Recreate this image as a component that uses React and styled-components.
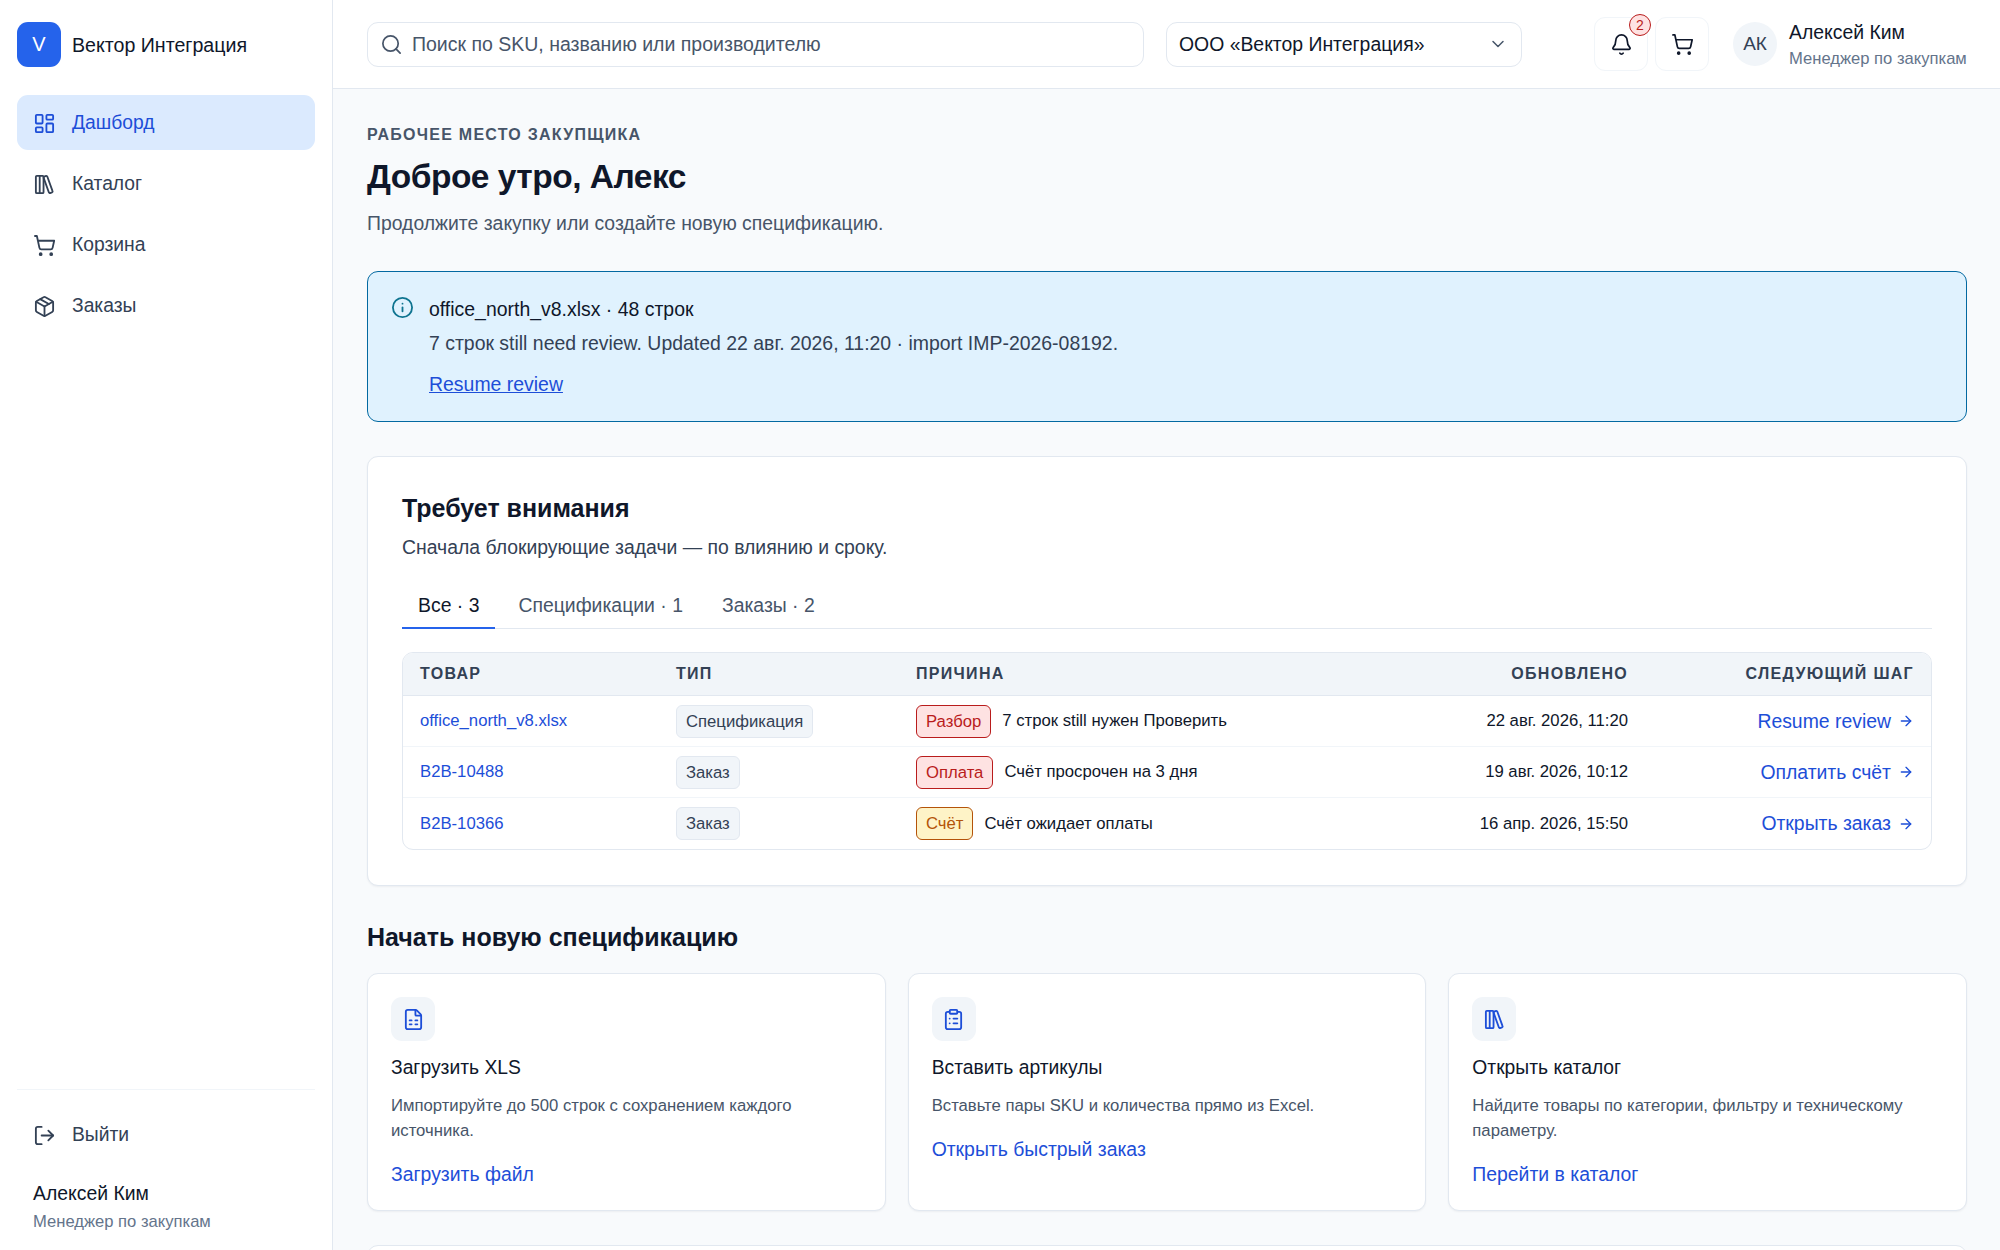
import styled, { createGlobalStyle } from "styled-components";
import {
  Search,
  ChevronDown,
  Bell,
  ShoppingCart,
  Info,
  ArrowRight,
  LogOut,
  ClipboardList,
  LayoutDashboard,
  LibraryBig,
  Package,
  FileSpreadsheet,
} from "lucide-react";

const GlobalStyle = createGlobalStyle`
  * { box-sizing: border-box; }
  html, body { margin: 0; height: 100%; overflow: hidden; }
  body {
    font-family: "Liberation Sans", Arial, sans-serif;
    color: #0f172a;
    background: #f8fafc;
  }
  a { text-decoration: none; }
`;

const navItems = [
  { label: "Дашборд", icon: LayoutDashboard, active: true },
  { label: "Каталог", icon: LibraryBig },
  { label: "Корзина", icon: ShoppingCart },
  { label: "Заказы", icon: Package },
];

const rows = [
  { id: "office_north_v8.xlsx", type: "Спецификация", tag: "Разбор", tone: "danger", reason: "7 строк still нужен Проверить", date: "22 авг. 2026, 11:20", next: "Resume review" },
  { id: "B2B-10488", type: "Заказ", tag: "Оплата", tone: "danger", reason: "Счёт просрочен на 3 дня", date: "19 авг. 2026, 10:12", next: "Оплатить счёт" },
  { id: "B2B-10366", type: "Заказ", tag: "Счёт", tone: "warn", reason: "Счёт ожидает оплаты", date: "16 апр. 2026, 15:50", next: "Открыть заказ" },
];

const actions = [
  { icon: FileSpreadsheet, title: "Загрузить XLS", text: "Импортируйте до 500 строк с сохранением каждого источника.", link: "Загрузить файл" },
  { icon: ClipboardList, title: "Вставить артикулы", text: "Вставьте пары SKU и количества прямо из Excel.", link: "Открыть быстрый заказ" },
  { icon: LibraryBig, title: "Открыть каталог", text: "Найдите товары по категории, фильтру и техническому параметру.", link: "Перейти в каталог" },
];

export default function App() {
  return (
    <Shell>
      <GlobalStyle />
      <Sidebar>
        <Brand>
          <BrandMark>V</BrandMark>
          <BrandName>Вектор Интеграция</BrandName>
        </Brand>
        <Nav>
          {navItems.map((item) => (
            <NavItem key={item.label} $active={item.active}>
              <item.icon size={23} strokeWidth={1.9} />
              {item.label}
            </NavItem>
          ))}
        </Nav>
        <SideFooter>
          <NavItem>
            <LogOut size={23} strokeWidth={1.9} />
            Выйти
          </NavItem>
          <SideUser>
            <UserName>Алексей Ким</UserName>
            <SideRole>Менеджер по закупкам</SideRole>
          </SideUser>
        </SideFooter>
      </Sidebar>
      <Column>
        <Topbar>
          <SearchBox>
            <Search size={23} strokeWidth={1.8} color="#475569" />
            Поиск по SKU, названию или производителю
          </SearchBox>
          <Select>
            ООО «Вектор Интеграция»
            <ChevronDown size={20} strokeWidth={1.8} color="#475569" />
          </Select>
          <IconGroup>
            <IconButton>
              <Bell size={23} strokeWidth={1.8} />
              <Badge>2</Badge>
            </IconButton>
            <IconButton>
              <ShoppingCart size={23} strokeWidth={1.8} />
            </IconButton>
          </IconGroup>
          <TopUser>
            <Avatar>АК</Avatar>
            <TopUserText>
              <UserName>Алексей Ким</UserName>
              <UserRole>Менеджер по закупкам</UserRole>
            </TopUserText>
          </TopUser>
        </Topbar>
        <Content>
          <Eyebrow>РАБОЧЕЕ МЕСТО ЗАКУПЩИКА</Eyebrow>
          <Title>Доброе утро, Алекс</Title>
          <Lead>Продолжите закупку или создайте новую спецификацию.</Lead>
          <Alert>
            <Info size={23} strokeWidth={1.9} color="#0e7490" />
            <div>
              <AlertTitle>office_north_v8.xlsx · 48 строк</AlertTitle>
              <AlertText>7 строк still need review. Updated 22 авг. 2026, 11:20 · import IMP-2026-08192.</AlertText>
              <AlertLink href="#">Resume review</AlertLink>
            </div>
          </Alert>
          <Panel>
            <PanelTitle>Требует внимания</PanelTitle>
            <PanelText>Сначала блокирующие задачи — по влиянию и сроку.</PanelText>
            <Tabs>
              <Tab $active>Все · 3</Tab>
              <Tab>Спецификации · 1</Tab>
              <Tab>Заказы · 2</Tab>
            </Tabs>
            <Table>
              <HeadRow>
                <span>ТОВАР</span>
                <span>ТИП</span>
                <span>ПРИЧИНА</span>
                <RightCell>ОБНОВЛЕНО</RightCell>
                <RightCell>СЛЕДУЮЩИЙ ШАГ</RightCell>
              </HeadRow>
              {rows.map((row) => (
                <Row key={row.id}>
                  <RowLink href="#">{row.id}</RowLink>
                  <div><TypeChip>{row.type}</TypeChip></div>
                  <Reason>
                    <Tag $tone={row.tone}>{row.tag}</Tag>
                    {row.reason}
                  </Reason>
                  <RightCell>{row.date}</RightCell>
                  <NextStep href="#">
                    {row.next}
                    <ArrowRight size={16} />
                  </NextStep>
                </Row>
              ))}
            </Table>
          </Panel>
          <SectionTitle>Начать новую спецификацию</SectionTitle>
          <Cards>
            {actions.map((action) => (
              <Card key={action.title}>
                <CardIcon><action.icon size={23} strokeWidth={1.9} /></CardIcon>
                <CardTitle>{action.title}</CardTitle>
                <CardText>{action.text}</CardText>
                <CardLink href="#">{action.link}</CardLink>
              </Card>
            ))}
          </Cards>
          <NextPanel />
        </Content>
      </Column>
    </Shell>
  );
}

const Shell = styled.div`
  display: flex;
  height: 100vh;
  overflow: hidden;
`;

const Sidebar = styled.aside`
  flex: 0 0 333px;
  display: flex;
  flex-direction: column;
  padding: 22px 17px 16px 17px;
  background: #fff;
  border-right: 1px solid #e2e8f0;
`;

const Brand = styled.div`
  display: flex;
  align-items: center;
  gap: 11px;
  margin-bottom: 28px;
`;

const BrandMark = styled.div`
  width: 44px;
  height: 45px;
  display: flex;
  align-items: center;
  justify-content: center;
  border-radius: 11px;
  background: #2563eb;
  color: #fff;
  font-size: 20px;
`;

const BrandName = styled.div`
  padding-top: 1px;
  font-size: 19.6px;
`;

const Nav = styled.nav`
  display: flex;
  flex-direction: column;
  gap: 6px;
`;

const NavItem = styled.a`
  display: flex;
  align-items: center;
  gap: 16px;
  height: 55px;
  padding: 1px 16px 0;
  border-radius: 11px;
  font-size: 19.3px;
  color: ${(p) => (p.$active ? "#1d4ed8" : "#334155")};
  background: ${(p) => (p.$active ? "#dbeafe" : "transparent")};
`;

const SideFooter = styled.div`
  margin-top: auto;
  padding-top: 17px;
  border-top: 1px solid #f1f5f9;
`;

const SideUser = styled.div`
  padding: 17px 16px 0;
`;

const UserName = styled.div`
  font-size: 19.4px;
  line-height: 28px;
`;

const UserRole = styled.div`
  margin-top: 1px;
  font-size: 16.6px;
  line-height: 24px;
  color: #64748b;
  white-space: nowrap;
`;

const SideRole = styled(UserRole)`
  margin-top: 3px;
`;

const Column = styled.div`
  flex: 1;
  min-width: 0;
  display: flex;
  flex-direction: column;
`;

const Topbar = styled.header`
  flex: 0 0 89px;
  display: flex;
  align-items: center;
  padding: 0 33px 0 34px;
  background: #fff;
  border-bottom: 1px solid #e2e8f0;
`;

const SearchBox = styled.div`
  flex: 0 0 777px;
  height: 45px;
  display: flex;
  align-items: center;
  gap: 9px;
  padding: 0 12px;
  border: 1px solid #e2e8f0;
  border-radius: 11px;
  background: #fff;
  font-size: 19.5px;
  color: #475569;
`;

const Select = styled.div`
  flex: 0 0 356px;
  height: 45px;
  margin-left: 22px;
  display: flex;
  align-items: center;
  justify-content: space-between;
  padding: 0 13px 0 12px;
  border: 1px solid #e2e8f0;
  border-radius: 11px;
  font-size: 19.4px;
`;

const IconGroup = styled.div`
  display: flex;
  gap: 7px;
  margin-left: 72px;
`;

const IconButton = styled.div`
  position: relative;
  width: 54px;
  height: 54px;
  display: flex;
  align-items: center;
  justify-content: center;
  border: 1px solid #f1f5f9;
  border-radius: 11px;
`;

const Badge = styled.span`
  position: absolute;
  top: -4px;
  right: -4px;
  width: 22px;
  height: 22px;
  display: flex;
  align-items: center;
  justify-content: center;
  border: 1px solid #b91c1c;
  border-radius: 50%;
  background: #fee2e2;
  color: #b91c1c;
  font-size: 14px;
`;

const TopUser = styled.div`
  display: flex;
  align-items: center;
  gap: 12px;
  margin-left: 24px;
`;

const TopUserText = styled.div`
  flex: none;
`;

const Avatar = styled.div`
  flex: none;
  width: 44px;
  height: 44px;
  display: flex;
  align-items: center;
  justify-content: center;
  border-radius: 50%;
  background: #f1f5f9;
  color: #334155;
  font-size: 19px;
`;

const Content = styled.main`
  flex: 1;
  overflow: hidden;
  padding: 34px 33px 0 34px;
`;

const Eyebrow = styled.div`
  font-size: 16px;
  line-height: 24px;
  font-weight: 700;
  letter-spacing: 1.25px;
  color: #475569;
`;

const Title = styled.h1`
  margin: 8px 0 0;
  font-size: 33.5px;
  line-height: 44px;
  font-weight: 700;
  letter-spacing: -0.5px;
`;

const Lead = styled.p`
  margin: 9px 0 0;
  font-size: 19.4px;
  line-height: 30px;
  color: #475569;
`;

const Alert = styled.div`
  margin-top: 33px;
  height: 151px;
  display: flex;
  align-items: flex-start;
  gap: 15px;
  padding: 24px 23px;
  border: 1px solid #0369a1;
  border-radius: 11px;
  background: #e0f2fe;
  color: #0f172a;
`;

const AlertTitle = styled.div`
  font-size: 19.45px;
  line-height: 26px;
`;

const AlertText = styled.div`
  margin-top: 8px;
  font-size: 19.45px;
  line-height: 26px;
  color: #334155;
`;

const AlertLink = styled.a`
  display: inline-block;
  margin-top: 15px;
  font-size: 19.45px;
  line-height: 26px;
  color: #1d4ed8;
  text-decoration: underline;
`;

const Panel = styled.section`
  margin-top: 34px;
  height: 430px;
  padding: 34px;
  border: 1px solid #e2e8f0;
  border-radius: 11px;
  background: #fff;
  box-shadow: 0 1px 2px rgba(15, 23, 42, 0.05);
`;

const PanelTitle = styled.h2`
  margin: 0;
  font-size: 25px;
  line-height: 34px;
  font-weight: 700;
`;

const PanelText = styled.p`
  margin: 7px 0 0;
  font-size: 19.4px;
  line-height: 30px;
  color: #334155;
`;

const Tabs = styled.div`
  display: flex;
  gap: 7px;
  margin-top: 22px;
  border-bottom: 1px solid #e2e8f0;
`;

const Tab = styled.div`
  height: 45px;
  margin-bottom: -1px;
  padding: 0 16px;
  display: flex;
  align-items: center;
  font-size: 19.4px;
  color: ${(p) => (p.$active ? "#0f172a" : "#475569")};
  border-bottom: 2px solid ${(p) => (p.$active ? "#2563eb" : "transparent")};
`;

const Table = styled.div`
  margin-top: 23px;
  border: 1px solid #e2e8f0;
  border-radius: 11px;
  overflow: hidden;
`;

const gridColumns = "256px 240px 1fr 240px 286px";

const HeadRow = styled.div`
  display: grid;
  grid-template-columns: ${gridColumns};
  align-items: center;
  height: 43px;
  padding: 0 17px;
  background: #f1f5f9;
  border-bottom: 1px solid #e2e8f0;
  font-size: 16px;
  font-weight: 700;
  letter-spacing: 1.3px;
  color: #334155;
`;

const Row = styled.div`
  display: grid;
  grid-template-columns: ${gridColumns};
  align-items: center;
  height: 51px;
  padding: 0 17px;
  border-bottom: 1px solid #f1f5f9;
  font-size: 16.7px;
  &:last-child { border-bottom: 0; }
`;

const RightCell = styled.span`
  text-align: right;
`;

const RowLink = styled.a`
  color: #1d4ed8;
`;

const TypeChip = styled.span`
  display: inline-block;
  padding: 0 9px;
  line-height: 31px;
  border: 1px solid #e2e8f0;
  border-radius: 6px;
  background: #f1f5f9;
  color: #334155;
`;

const Reason = styled.div`
  display: flex;
  align-items: center;
  gap: 11px;
`;

const tones = {
  danger: "border: 1px solid #b91c1c; background: #fee2e2; color: #b91c1c;",
  warn: "border: 1px solid #b45309; background: #fef3c7; color: #b45309;",
};

const Tag = styled.span`
  padding: 0 9px;
  line-height: 31px;
  border-radius: 6px;
  ${(p) => tones[p.$tone]}
`;

const NextStep = styled.a`
  display: flex;
  align-items: center;
  justify-content: flex-end;
  gap: 7px;
  font-size: 19.4px;
  color: #1d4ed8;
`;

const SectionTitle = styled.h2`
  margin: 34px 0 0;
  font-size: 25px;
  line-height: 34px;
  font-weight: 700;
`;

const Cards = styled.div`
  display: grid;
  grid-template-columns: repeat(3, 1fr);
  gap: 22px;
  margin-top: 19px;
`;

const Card = styled.div`
  height: 238px;
  padding: 23px;
  border: 1px solid #e2e8f0;
  border-radius: 11px;
  background: #fff;
  box-shadow: 0 1px 2px rgba(15, 23, 42, 0.05);
`;

const CardIcon = styled.div`
  width: 44px;
  height: 44px;
  display: flex;
  align-items: center;
  justify-content: center;
  border-radius: 11px;
  background: #f1f5f9;
  color: #1d4ed8;
`;

const CardTitle = styled.div`
  margin-top: 13px;
  font-size: 19.3px;
  line-height: 28px;
`;

const CardText = styled.p`
  margin: 11px 0 0;
  font-size: 16.7px;
  line-height: 25px;
  color: #475569;
`;

const CardLink = styled.a`
  display: block;
  margin-top: 17px;
  font-size: 19.4px;
  line-height: 28px;
  color: #1d4ed8;
`;

const NextPanel = styled.div`
  margin-top: 34px;
  height: 200px;
  border: 1px solid #e2e8f0;
  border-radius: 11px;
  background: #fff;
`;
